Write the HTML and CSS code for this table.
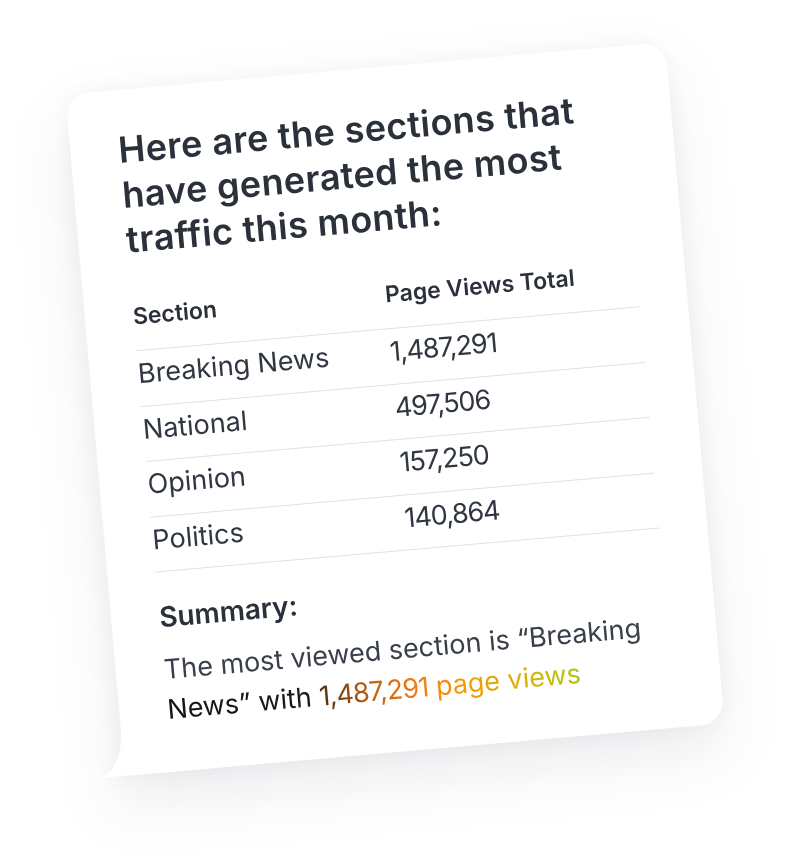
FILE: index.html
```html
<!DOCTYPE html>
<html lang="en">
<head>
<meta charset="utf-8">
<title>Top sections</title>
<link rel="stylesheet" href="styles.css">
</head>
<body>
<div class="stage">
  <div class="shadow">
    <div class="card">
      <h1 class="title">Here are the sections that<br>have generated the most<br>traffic this month:</h1>
      <table class="stats">
        <thead>
          <tr><th>Section</th><th>Page Views Total</th></tr>
        </thead>
        <tbody>
          <tr><td>Breaking News</td><td class="num">1,487,291</td></tr>
          <tr><td>National</td><td class="num">497,506</td></tr>
          <tr><td>Opinion</td><td class="num">157,250</td></tr>
          <tr><td>Politics</td><td class="num">140,864</td></tr>
        </tbody>
      </table>
      <h2 class="summary-label">Summary:</h2>
      <p class="summary">The most viewed section is “Breaking<br><span class="glow">News” with <span class="tight">1,487,291</span> page views</span></p>
      <svg class="tail" width="28" height="46" viewBox="0 0 28 46" aria-hidden="true"><path d="M28 0 A28 46 0 0 1 0 46 L28 46 Z" fill="#ffffff"/></svg>
    </div>
  </div>
</div>
</body>
</html>
```

FILE: styles.css
```css
* { box-sizing: border-box; }
html, body { margin: 0; padding: 0; background: #ffffff; }
body { font-family: Inter, "Noto Sans", sans-serif; }

.stage {
  width: 789px;
  height: 866px;
  padding: 67px 0 0 94px;
  overflow: hidden;
}

.shadow {
  width: 602px;
  filter: drop-shadow(0 26px 30px rgba(30, 40, 70, 0.085)) drop-shadow(0 0 12px rgba(30, 40, 70, 0.04));
}

.card {
  position: relative;
  width: 602px;
  height: 684px;
  padding: 38px 48px 0 48px;
  background: #ffffff;
  border-radius: 24px 24px 24px 0;
  transform: rotate(-5deg);
}

.tail {
  position: absolute;
  left: -28px;
  bottom: 0;
  display: block;
}

.title {
  margin: 0;
  font-size: 36px;
  line-height: 45px;
  font-weight: 600;
  color: #2b313b;
  letter-spacing: 0.4px;
}

.stats {
  width: 100%;
  margin-top: 39px;
  border-collapse: collapse;
  table-layout: fixed;
}

.stats th,
.stats td {
  width: 50%;
  text-align: left;
  padding: 0;
  border-bottom: 1px solid #dfe0e8;
}

.stats th {
  font-size: 23px;
  line-height: 30px;
  font-weight: 600;
  color: #2b313b;
  padding-bottom: 19px;
}

.stats td {
  font-size: 27px;
  line-height: 34px;
  font-weight: 400;
  color: #313742;
  padding-top: 6px;
  padding-bottom: 14.5px;
}

.stats td.num {
  letter-spacing: -1.1px;
}

.summary-label {
  margin: 29px 0 0;
  font-size: 28px;
  line-height: 32px;
  font-weight: 600;
  color: #2b313b;
}

.summary {
  margin: 17px 0 0;
  font-size: 27px;
  line-height: 40px;
  font-weight: 400;
  color: #3a404b;
}

.tight {
  letter-spacing: -0.8px;
}

.glow {
  background: linear-gradient(90deg, #141414 0%, #1a1a1a 34%, #5a3210 38%, #b85c10 48%, #f47a12 60%, #f29a06 72%, #d8b002 86%, #afc40c 100%);
  -webkit-background-clip: text;
  background-clip: text;
  color: transparent;
}
```
